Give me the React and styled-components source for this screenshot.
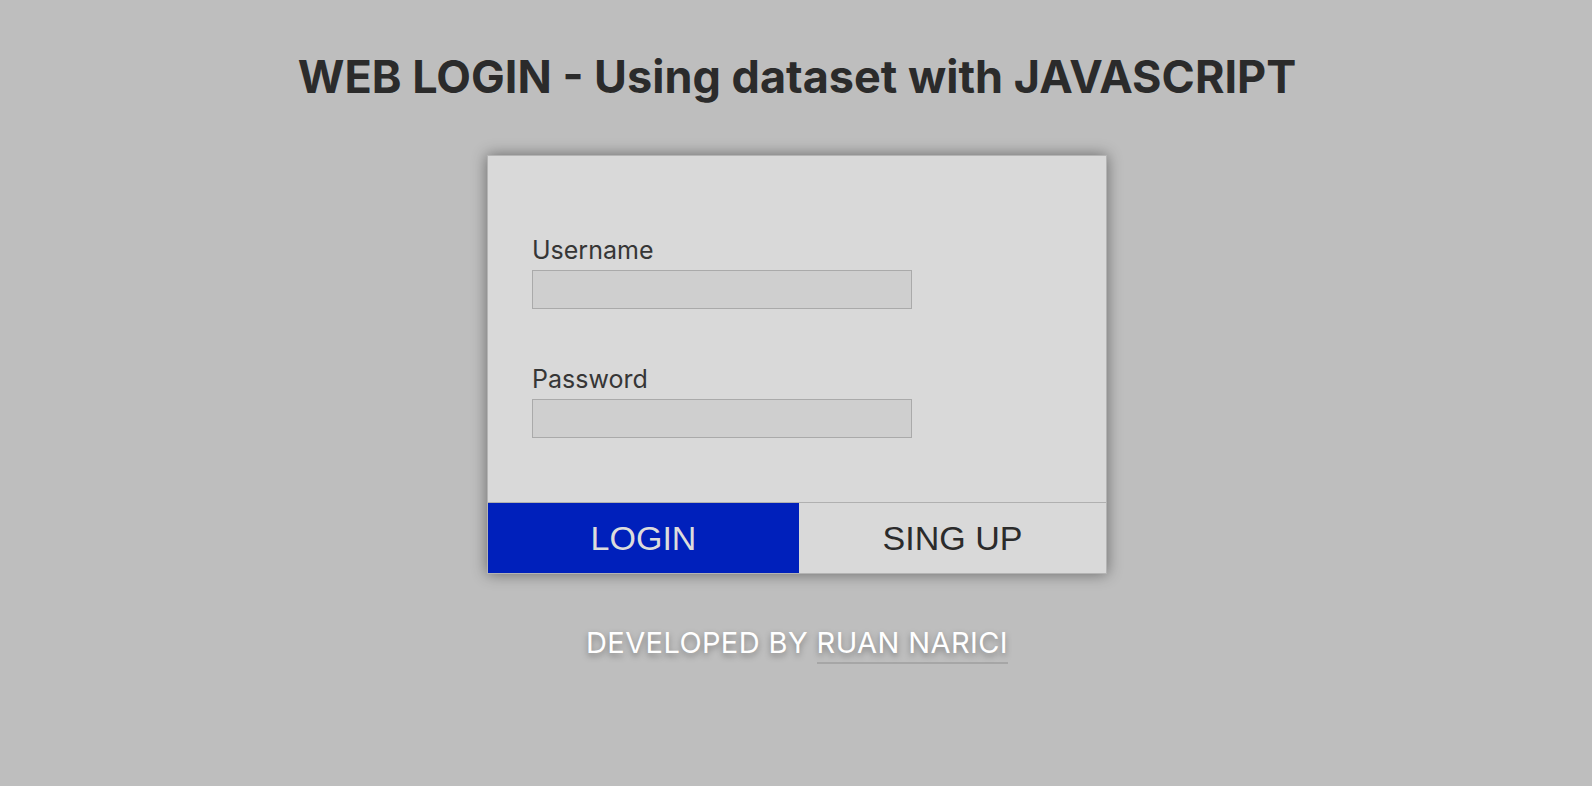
import styled, { createGlobalStyle } from 'styled-components'

// Global page styles
const GlobalStyle = createGlobalStyle`
  html, body {
    margin: 0;
    padding: 0;
    background: #bebebe;
    font-family: Inter, "Noto Sans", sans-serif;
  }
  * {
    box-sizing: border-box;
  }
`

// Login page
const App = () => {
  return (
    <>
      <GlobalStyle />
      <Page>
        <Title>WEB LOGIN - Using dataset with JAVASCRIPT</Title>
        <Card>
          <Fields>
            <Field>
              <Label htmlFor="username">Username</Label>
              <Input id="username" type="text" />
            </Field>
            <Field>
              <Label htmlFor="password">Password</Label>
              <Input id="password" type="password" />
            </Field>
          </Fields>
          <Actions>
            <Button primary>LOGIN</Button>
            <Button>SING UP</Button>
          </Actions>
        </Card>
        <Footer>
          DEVELOPED BY <Author href="#">RUAN NARICI</Author>
        </Footer>
      </Page>
    </>
  )
}

// Styles
const Page = styled.main`
  display: flex;
  flex-direction: column;
  align-items: center;
  min-height: 786px;
  padding-top: 50px;
  padding-left: 2px;
`
const Title = styled.h1`
  margin: 0 0 51px;
  font-size: 45px;
  line-height: 54px;
  font-weight: 700;
  color: #2b2b2b;
`
const Card = styled.section`
  width: 620px;
  background: #d9d9d9;
  border: 1px solid #b4b4b4;
  box-shadow: 0 0 14px rgba(0, 0, 0, 0.45);
`
const Fields = styled.div`
  display: flex;
  flex-direction: column;
  gap: 56px;
  padding: 80px 44px 64px;
`
const Field = styled.div`
  display: flex;
  flex-direction: column;
  align-items: flex-start;
`
const Label = styled.label`
  font-size: 25px;
  line-height: 28px;
  font-weight: 400;
  color: #363636;
  margin-bottom: 6px;
`
const Input = styled.input`
  width: 380px;
  height: 39px;
  background: #cfcfcf;
  border: 1px solid #aaaaaa;
  outline: none;
`
const Actions = styled.div`
  display: flex;
  height: 71px;
  border-top: 1px solid #b0b0b0;
`
const Button = styled.button`
  flex: ${props => props.primary ? '0 0 311px' : '1 1 auto'};
  border: none;
  margin: 0;
  font-family: "Liberation Sans", Arial, sans-serif;
  font-size: 34px;
  background: ${props => props.primary ? '#0020bb' : '#d9d9d9'};
  color: ${props => props.primary ? '#dcdcdc' : '#2b2b2b'};
  cursor: pointer;
`
const Footer = styled.p`
  margin: 51px 0 0;
  font-size: 29px;
  line-height: 36px;
  letter-spacing: 0.4px;
  color: #ffffff;
  text-shadow: 0 3px 6px rgba(0, 0, 0, 0.35);
`
const Author = styled.a`
  color: #ffffff;
  text-decoration: none;
  padding-bottom: 2px;
  border-bottom: 2px solid #a6a6a6;
`

// Export
export default App
